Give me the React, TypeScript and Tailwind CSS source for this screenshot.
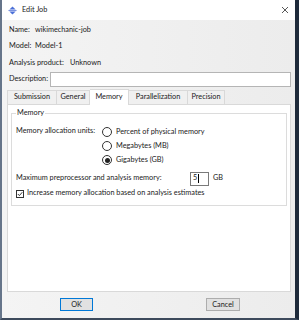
import React from "react";

const font = { fontFamily: 'Lato, "Noto Sans", sans-serif' };

function Radio({ checked, label }: { checked?: boolean; label: string }) {
  return (
    <div className="flex h-[14px] items-center gap-[4px]">
      <span className="flex h-[10px] w-[10px] items-center justify-center rounded-full border border-[#333] bg-white">
        {checked && <span className="h-[5px] w-[5px] rounded-full bg-[#222]" />}
      </span>
      <span>{label}</span>
    </div>
  );
}

const tabs = [
  { label: "Submission", w: "w-[50px]" },
  { label: "General", w: "w-[33px]" },
  { label: "Memory", w: "w-[39px]", active: true },
  { label: "Parallelization", w: "w-[59px]" },
  { label: "Precision", w: "w-[37px]" },
];

export default function App() {
  return (
    <div
      className="flex h-[320px] w-[299px] flex-col border-b-2 border-l-2 border-r-4 border-b-[#3d4a5c] border-l-[#66758a] border-r-[#1e2a3a] text-[7.3px] text-[#1a1a1a]"
      style={font}
    >
      {/* Title bar */}
      <div className="flex h-[20px] shrink-0 items-center bg-white pl-[6px] pr-[6px]">
        <svg width="9" height="9" viewBox="0 0 10 10" className="mr-[5px]">
          <path d="M5 0.5 L8.5 4 H1.5 Z" fill="#4a6fd8" />
          <path d="M5 9.5 L8.5 6 H1.5 Z" fill="#4a6fd8" />
          <rect x="0.5" y="4.4" width="9" height="1.2" fill="#7b93e0" />
        </svg>
        <span>Edit Job</span>
        <svg width="8" height="8" viewBox="0 0 8 8" className="ml-auto">
          <path d="M1 1 L7 7 M7 1 L1 7" stroke="#444" strokeWidth="0.9" />
        </svg>
      </div>

      {/* Body */}
      <div className="flex flex-1 flex-col bg-gradient-to-r from-[#f4f4f4] to-[#ececec] px-[4px]">
        <div className="mt-[2px] flex flex-col pl-[3px]">
          <div className="flex h-[16.5px] items-center">
            <span className="w-[26px]">Name:</span>
            <span>wikimechanic-job</span>
          </div>
          <div className="flex h-[16.5px] items-center">
            <span className="w-[26px]">Model:</span>
            <span>Model-1</span>
          </div>
          <div className="flex h-[16.5px] items-center">
            <span className="w-[61px]">Analysis product:</span>
            <span>Unknown</span>
          </div>
          <div className="flex h-[16.5px] items-center">
            <span className="w-[41px]">Description:</span>
            <div className="h-[15px] flex-1 border border-[#b5b5b5] bg-white" />
          </div>
        </div>

        {/* Tabs */}
        <div className="mt-[1px] flex h-[15px] items-end pl-[1px]">
          {tabs.map((t, i) =>
            t.active ? (
              <div
                key={t.label}
                className={`relative z-10 -mb-[1px] flex h-[16px] items-center justify-center border border-b-0 border-l-0 border-[#d9d9d9] bg-white ${t.w}`}
              >
                {t.label}
              </div>
            ) : (
              <div
                key={t.label}
                className={`flex h-[14px] items-center justify-center border border-b-0 border-[#d9d9d9] bg-[#f0f0f0] ${i === 0 ? "" : "border-l-0"} ${t.w}`}
              >
                {t.label}
              </div>
            )
          )}
        </div>

        {/* Panel */}
        <div className="ml-[1px] h-[188px] border border-[#d9d9d9] bg-white px-[3px] pt-[8px]">
          <div className="relative border border-[#dcdcdc] px-[4px] pb-[5px] pt-[11px]">
            <span className="absolute -top-[5px] left-[4px] bg-white px-[1px] leading-none">Memory</span>
            <div className="flex">
              <span className="mt-[1px] w-[86px]">Memory allocation units:</span>
              <div className="flex flex-col">
                <Radio label="Percent of physical memory" />
                <Radio label="Megabytes (MB)" />
                <Radio checked label="Gigabytes (GB)" />
              </div>
            </div>
            <div className="mt-[4px] flex h-[15px] items-center">
              <span className="w-[174px]">Maximum preprocessor and analysis memory:</span>
              <div className="flex h-[14px] w-[19px] items-center border border-[#7a7a7a] bg-white pl-[2px]">
                5<span className="ml-[0.5px] h-[9px] w-[1px] bg-black" />
              </div>
              <span className="ml-[4px]">GB</span>
            </div>
            <div className="mt-[1px] flex h-[13px] items-center gap-[3px]">
              <span className="flex h-[8px] w-[8px] items-center justify-center border border-[#333] bg-white">
                <svg width="6" height="6" viewBox="0 0 6 6">
                  <path d="M0.8 3 L2.4 4.6 L5.3 1.2" fill="none" stroke="#222" strokeWidth="0.9" />
                </svg>
              </span>
              <span>Increase memory allocation based on analysis estimates</span>
            </div>
          </div>
        </div>

        {/* Buttons */}
        <div className="flex h-[25px] items-center">
          <button className="ml-[54px] h-[13px] w-[33px] border border-[#0078d7] bg-[#e1e1e1] text-[7.3px] leading-none">OK</button>
          <button className="ml-[113px] h-[13px] w-[34px] border border-[#adadad] bg-[#e1e1e1] text-[7.3px] leading-none">Cancel</button>
        </div>
      </div>
    </div>
  );
}
